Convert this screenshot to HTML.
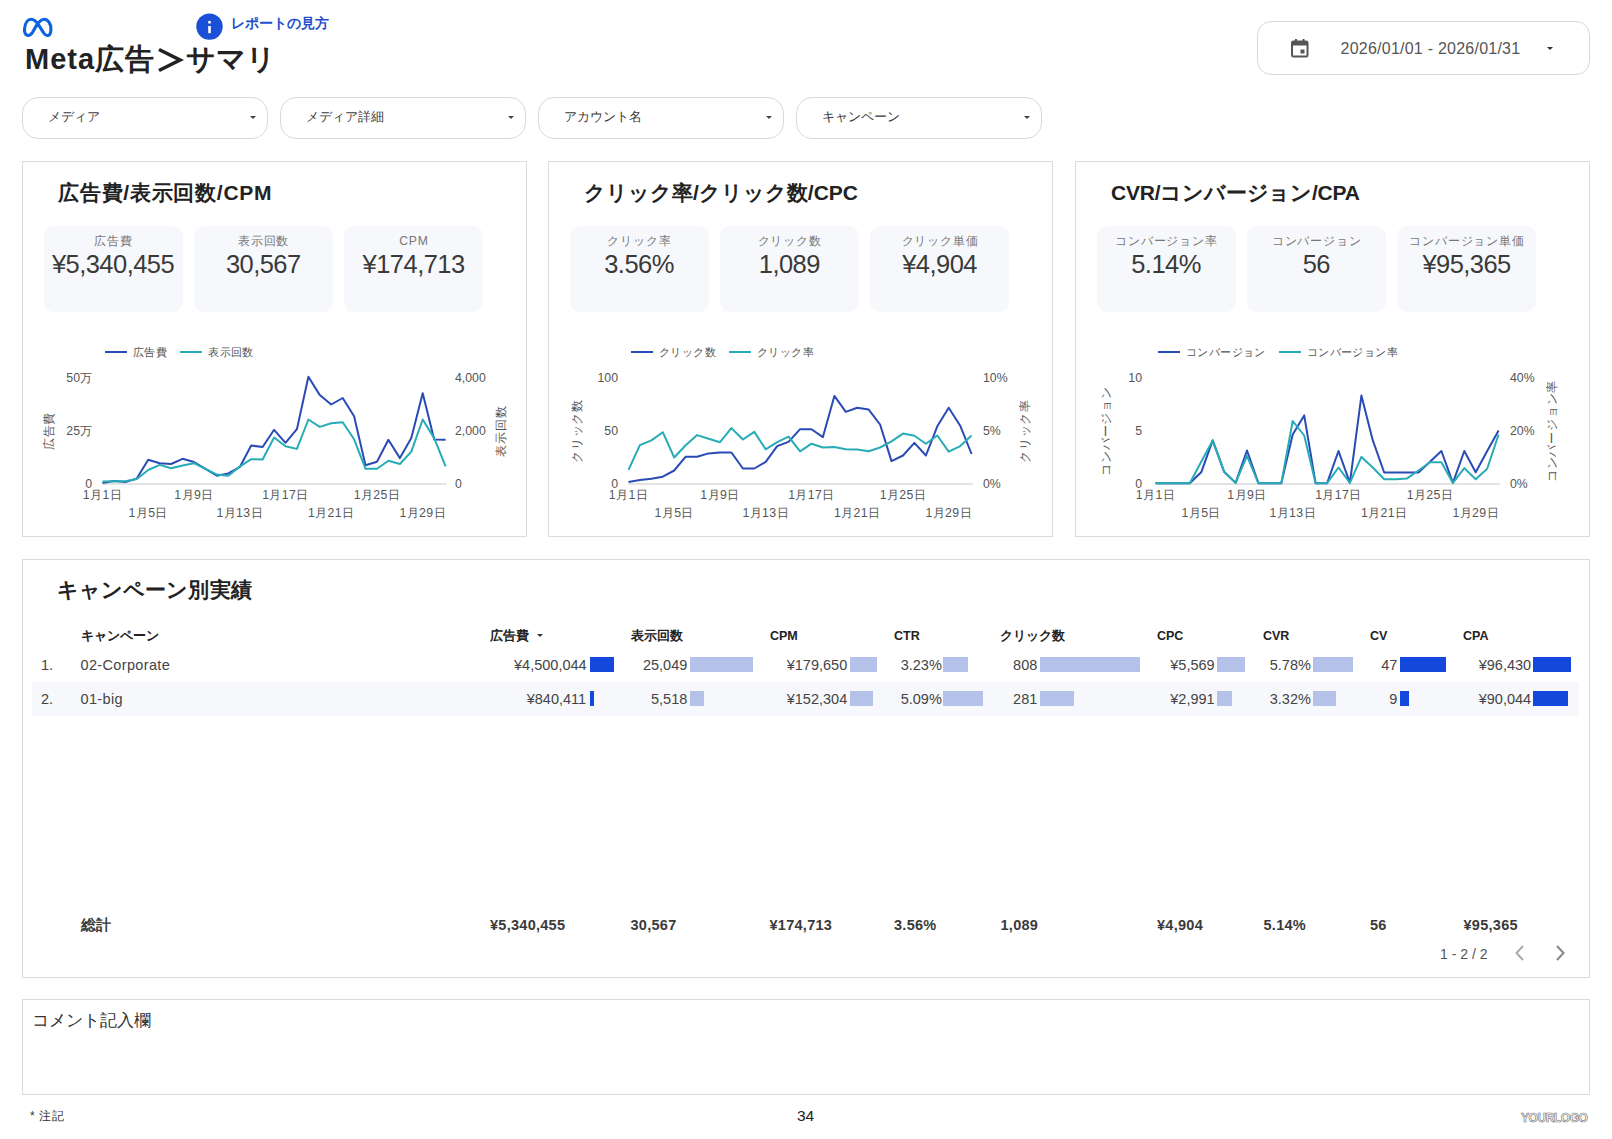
<!DOCTYPE html><html lang="ja"><head><meta charset="utf-8"><title>Meta広告＞サマリ</title><style>
*{margin:0;padding:0;box-sizing:border-box}
html,body{width:1612px;height:1139px;background:#fff;overflow:hidden}
body{font-family:"Liberation Sans",sans-serif;color:#333;position:relative}
.abs{position:absolute;white-space:nowrap}
.panel{position:absolute;border:1px solid #dcdcdc;background:#fff}
.panel>div{position:absolute;white-space:nowrap}
.inner{position:absolute;left:-1px;top:-1px}
.inner>div{position:absolute;white-space:nowrap}
.ptitle{font-size:21px;letter-spacing:0.3px;font-weight:bold;color:#222;line-height:24px}
.card{width:139px;height:86px;background:#f7f8fb;border-radius:10px;text-align:center}
.clab{position:absolute;left:0.8px;right:0;top:7.5px;font-size:12.2px;letter-spacing:0.8px;line-height:16px;color:#777}
.cval{position:absolute;left:0;right:0;top:23px;font-size:25.5px;letter-spacing:-0.55px;line-height:30px;color:#3a3a3a}
.legend{font-size:11.4px;letter-spacing:0.4px;line-height:14px;color:#555;display:flex;align-items:center}
.lline{display:inline-block;width:22px;height:2px;margin-right:6px}
.plot{position:absolute}
.ltick,.rtick{font-size:12.3px;line-height:16px;color:#555}
.atitle{font-size:12.3px;letter-spacing:0.8px;line-height:16px;color:#555;transform:translate(-50%,-50%) rotate(-90deg)}
.xl{font-size:12.3px;letter-spacing:0.4px;line-height:16px;color:#555;transform:translateX(-50%)}
.filter{position:absolute;top:97px;width:246px;height:42px;border:1px solid #dadada;border-radius:16px;background:#fff}
.filter span{position:absolute;left:25px;top:9.5px;font-size:13.4px;line-height:17px;color:#3a3a3a}
.arrow{position:absolute;width:0;height:0;border-left:3.5px solid transparent;border-right:3.5px solid transparent;border-top:3.5px solid #444}
.th{position:absolute;font-size:12.5px;font-weight:bold;color:#222;line-height:16px;white-space:nowrap}
.td{position:absolute;font-size:14.5px;color:#444;line-height:18px;white-space:nowrap}
.tdr{position:absolute;font-size:14.5px;color:#444;line-height:18px;white-space:nowrap;text-align:right}
.bar{position:absolute;height:15px}
.tot{position:absolute;font-size:14.5px;letter-spacing:0.27px;font-weight:bold;color:#3a3a3a;line-height:18px;white-space:nowrap}
</style></head><body>
<svg class="abs" style="left:18px;top:12px" width="40" height="30" viewBox="0 0 1519 1139">
<path d="M390 890 C250 890 240 720 250 620 C270 420 370 275 500 275 C620 275 700 370 780 490 L980 800 C1040 880 1080 895 1130 895 C1220 895 1250 780 1250 640 C1250 430 1130 275 990 275 C870 275 800 370 720 480 L560 760 C500 850 450 890 390 890 Z" fill="none" stroke="#0b64de" stroke-width="118" stroke-linejoin="round"/>
</svg>
<svg class="abs" style="left:195px;top:13px" width="28" height="28" viewBox="0 0 28 28"><circle cx="14.5" cy="13.6" r="13.2" fill="#1a50d8"/><rect x="13.2" y="8" width="2.6" height="2.5" fill="#fff"/><rect x="13.2" y="13" width="2.6" height="7.2" fill="#fff"/></svg>
<div class="abs" style="left:231px;top:14px;font-size:14.2px;line-height:18px;font-weight:bold;color:#1f4fcc">レポートの見方</div>
<div class="abs" style="left:25px;top:42px;font-size:29px;letter-spacing:1px;line-height:34px;font-weight:bold;color:#222">Meta広告</div>
<svg class="abs" style="left:155px;top:45px" width="30" height="30" viewBox="0 0 30 30"><path d="M4 4.5 L25 15 L4 25.5" fill="none" stroke="#222" stroke-width="3.6" stroke-linejoin="miter"/></svg>
<div class="abs" style="left:186px;top:42px;font-size:29px;line-height:34px;font-weight:bold;color:#222">サマリ</div>
<div class="abs" style="left:1257px;top:21px;width:333px;height:54px;border:1px solid #d8d8d8;border-radius:14px;background:#fff"></div>
<svg class="abs" style="left:1290px;top:38px" width="20" height="20" viewBox="0 0 20 20"><rect x="2" y="3.5" width="15.5" height="15" rx="1.3" fill="none" stroke="#555" stroke-width="2"/><rect x="2" y="3.5" width="15.5" height="4" fill="#555"/><rect x="5" y="1" width="2" height="4" fill="#555"/><rect x="12.5" y="1" width="2" height="4" fill="#555"/><rect x="10.5" y="11.5" width="4" height="4" fill="#555"/></svg>
<div class="abs" style="left:1340.5px;top:40px;font-size:16px;letter-spacing:0.24px;line-height:18px;color:#555">2026/01/01 - 2026/01/31</div>
<div class="arrow" style="left:1547px;top:46.5px;border-left-width:3.6px;border-right-width:3.6px;border-top-width:3.6px;border-top-color:#333"></div>
<div class="filter" style="left:22px"><span>メディア</span></div>
<div class="arrow" style="left:249.5px;top:116px;border-left-width:3px;border-right-width:3px;border-top-width:3.2px"></div>
<div class="filter" style="left:280px"><span>メディア詳細</span></div>
<div class="arrow" style="left:507.5px;top:116px;border-left-width:3px;border-right-width:3px;border-top-width:3.2px"></div>
<div class="filter" style="left:538px"><span>アカウント名</span></div>
<div class="arrow" style="left:765.5px;top:116px;border-left-width:3px;border-right-width:3px;border-top-width:3.2px"></div>
<div class="filter" style="left:796px"><span>キャンペーン</span></div>
<div class="arrow" style="left:1023.5px;top:116px;border-left-width:3px;border-right-width:3px;border-top-width:3.2px"></div>
<div class="panel" style="left:22px;top:161px;width:505px;height:376px"><div class="inner" style="width:505px;height:376px">
<div class="ptitle" style="left:36px;top:20px;letter-spacing:0.75px">広告費/表示回数/CPM</div>
<div class="card" style="left:21.5px;top:64.5px"><div class="clab">広告費</div><div class="cval">¥5,340,455</div></div>
<div class="card" style="left:171.8px;top:64.5px"><div class="clab">表示回数</div><div class="cval">30,567</div></div>
<div class="card" style="left:322.1px;top:64.5px"><div class="clab">CPM</div><div class="cval">¥174,713</div></div>
<div class="legend" style="left:83px;top:184px"><span class="lline" style="background:#2a4ab6"></span><span class="ltxt">広告費</span><span class="lline" style="background:#27acb6;margin-left:13px"></span><span class="ltxt">表示回数</span></div>
<svg class="plot" width="505" height="376" viewBox="0 0 505 376" style="left:0;top:0">
<line x1="80.5" y1="323" x2="424.6" y2="323" stroke="#c8c8c8" stroke-width="1.2"/>
<path d="M80.5,321.9 L91.9,319.9 L103.4,321.0 L114.8,317.6 L126.2,298.7 L137.7,302.2 L149.1,303.0 L160.6,297.8 L172.0,301.0 L183.4,307.9 L194.9,314.7 L206.3,312.4 L217.7,306.2 L229.2,284.5 L240.6,286.0 L252.1,268.8 L263.5,281.8 L274.9,268.2 L286.4,215.8 L297.8,234.1 L309.2,243.5 L320.7,237.0 L332.1,255.3 L343.5,304.2 L355.0,300.7 L366.4,278.8 L377.9,297.1 L389.3,277.1 L400.7,232.3 L412.2,278.5 L423.6,278.8" fill="none" stroke="#2a4ab6" stroke-width="2" stroke-linejoin="round"/>
<path d="M80.5,320.4 L91.9,320.2 L103.4,320.2 L114.8,318.0 L126.2,309.0 L137.7,303.9 L149.1,307.3 L160.6,304.5 L172.0,302.2 L183.4,307.9 L194.9,313.6 L206.3,314.7 L217.7,305.6 L229.2,298.2 L240.6,298.5 L252.1,276.5 L263.5,285.3 L274.9,287.9 L286.4,258.5 L297.8,265.9 L309.2,262.3 L320.7,261.2 L332.1,278.3 L343.5,307.7 L355.0,307.7 L366.4,299.7 L377.9,303.0 L389.3,290.6 L400.7,258.5 L412.2,277.1 L423.6,305.4" fill="none" stroke="#27acb6" stroke-width="2" stroke-linejoin="round"/>
</svg>
<div class="ltick" style="right:435px;top:208.5px">50万</div>
<div class="ltick" style="right:435px;top:261.8px">25万</div>
<div class="ltick" style="right:435px;top:315.0px">0</div>
<div class="rtick" style="left:433px;top:208.5px">4,000</div>
<div class="rtick" style="left:433px;top:261.8px">2,000</div>
<div class="rtick" style="left:433px;top:315.0px">0</div>
<div class="atitle" style="left:27px;top:270px">広告費</div>
<div class="atitle" style="left:479px;top:270px">表示回数</div>
<div class="xl" style="left:80.5px;top:326.3px">1月1日</div>
<div class="xl" style="left:126.2px;top:343.8px">1月5日</div>
<div class="xl" style="left:172.0px;top:326.3px">1月9日</div>
<div class="xl" style="left:217.7px;top:343.8px">1月13日</div>
<div class="xl" style="left:263.5px;top:326.3px">1月17日</div>
<div class="xl" style="left:309.2px;top:343.8px">1月21日</div>
<div class="xl" style="left:355.0px;top:326.3px">1月25日</div>
<div class="xl" style="left:400.7px;top:343.8px">1月29日</div>
</div></div>
<div class="panel" style="left:548px;top:161px;width:505px;height:376px"><div class="inner" style="width:505px;height:376px">
<div class="ptitle" style="left:36px;top:20px;letter-spacing:0.0px">クリック率/クリック数/CPC</div>
<div class="card" style="left:21.5px;top:64.5px"><div class="clab">クリック率</div><div class="cval">3.56%</div></div>
<div class="card" style="left:171.8px;top:64.5px"><div class="clab">クリック数</div><div class="cval">1,089</div></div>
<div class="card" style="left:322.1px;top:64.5px"><div class="clab">クリック単価</div><div class="cval">¥4,904</div></div>
<div class="legend" style="left:83px;top:184px"><span class="lline" style="background:#2a4ab6"></span><span class="ltxt">クリック数</span><span class="lline" style="background:#27acb6;margin-left:13px"></span><span class="ltxt">クリック率</span></div>
<svg class="plot" width="505" height="376" viewBox="0 0 505 376" style="left:0;top:0">
<line x1="80.5" y1="323" x2="424.6" y2="323" stroke="#c8c8c8" stroke-width="1.2"/>
<path d="M80.5,321.0 L91.9,318.9 L103.4,317.7 L114.8,315.7 L126.2,309.5 L137.7,295.7 L149.1,295.7 L160.6,292.4 L172.0,291.5 L183.4,291.5 L194.9,307.5 L206.3,307.5 L217.7,300.9 L229.2,285.1 L240.6,280.9 L252.1,268.2 L263.5,268.2 L274.9,276.1 L286.4,234.9 L297.8,250.9 L309.2,246.7 L320.7,248.6 L332.1,263.5 L343.5,300.1 L355.0,294.5 L366.4,281.8 L377.9,294.5 L389.3,265.3 L400.7,246.7 L412.2,264.7 L423.6,293.0" fill="none" stroke="#2a4ab6" stroke-width="2" stroke-linejoin="round"/>
<path d="M80.5,308.9 L91.9,284.2 L103.4,279.4 L114.8,271.2 L126.2,296.5 L137.7,284.2 L149.1,274.1 L160.6,277.7 L172.0,281.2 L183.4,267.1 L194.9,278.5 L206.3,270.9 L217.7,288.3 L229.2,281.2 L240.6,275.7 L252.1,290.3 L263.5,282.7 L274.9,286.5 L286.4,285.9 L297.8,288.3 L309.2,288.6 L320.7,290.3 L332.1,286.5 L343.5,280.4 L355.0,272.6 L366.4,274.7 L377.9,282.7 L389.3,274.5 L400.7,290.6 L412.2,285.1 L423.6,274.5" fill="none" stroke="#27acb6" stroke-width="2" stroke-linejoin="round"/>
</svg>
<div class="ltick" style="right:435px;top:208.5px">100</div>
<div class="ltick" style="right:435px;top:261.8px">50</div>
<div class="ltick" style="right:435px;top:315.0px">0</div>
<div class="rtick" style="left:435px;top:208.5px">10%</div>
<div class="rtick" style="left:435px;top:261.8px">5%</div>
<div class="rtick" style="left:435px;top:315.0px">0%</div>
<div class="atitle" style="left:28.5px;top:270px">クリック数</div>
<div class="atitle" style="left:477px;top:270px">クリック率</div>
<div class="xl" style="left:80.5px;top:326.3px">1月1日</div>
<div class="xl" style="left:126.2px;top:343.8px">1月5日</div>
<div class="xl" style="left:172.0px;top:326.3px">1月9日</div>
<div class="xl" style="left:217.7px;top:343.8px">1月13日</div>
<div class="xl" style="left:263.5px;top:326.3px">1月17日</div>
<div class="xl" style="left:309.2px;top:343.8px">1月21日</div>
<div class="xl" style="left:355.0px;top:326.3px">1月25日</div>
<div class="xl" style="left:400.7px;top:343.8px">1月29日</div>
</div></div>
<div class="panel" style="left:1075px;top:161px;width:515px;height:376px"><div class="inner" style="width:515px;height:376px">
<div class="ptitle" style="left:36px;top:20px;letter-spacing:-0.2px">CVR/コンバージョン/CPA</div>
<div class="card" style="left:21.5px;top:64.5px"><div class="clab">コンバージョン率</div><div class="cval">5.14%</div></div>
<div class="card" style="left:171.8px;top:64.5px"><div class="clab">コンバージョン</div><div class="cval">56</div></div>
<div class="card" style="left:322.1px;top:64.5px"><div class="clab">コンバージョン単価</div><div class="cval">¥95,365</div></div>
<div class="legend" style="left:83px;top:184px"><span class="lline" style="background:#2a4ab6"></span><span class="ltxt">コンバージョン</span><span class="lline" style="background:#27acb6;margin-left:13px"></span><span class="ltxt">コンバージョン率</span></div>
<svg class="plot" width="515" height="376" viewBox="0 0 515 376" style="left:0;top:0">
<line x1="80.5" y1="323" x2="424.6" y2="323" stroke="#c8c8c8" stroke-width="1.2"/>
<path d="M80.5,322.2 L91.9,322.2 L103.4,322.2 L114.8,322.2 L126.2,311.3 L137.7,279.4 L149.1,310.7 L160.6,321.9 L172.0,289.5 L183.4,322.2 L194.9,322.2 L206.3,322.2 L217.7,273.5 L229.2,254.4 L240.6,322.2 L252.1,322.2 L263.5,290.0 L274.9,321.9 L286.4,234.6 L297.8,279.4 L309.2,311.5 L320.7,311.5 L332.1,311.5 L343.5,311.5 L355.0,300.7 L366.4,290.0 L377.9,321.9 L389.3,290.0 L400.7,311.3 L412.2,290.0 L423.6,269.4" fill="none" stroke="#2a4ab6" stroke-width="2" stroke-linejoin="round"/>
<path d="M80.5,322.2 L91.9,322.2 L103.4,322.2 L114.8,322.2 L126.2,300.7 L137.7,279.4 L149.1,310.7 L160.6,321.9 L172.0,294.8 L183.4,322.2 L194.9,322.2 L206.3,322.2 L217.7,260.0 L229.2,274.5 L240.6,322.2 L252.1,322.2 L263.5,306.5 L274.9,321.9 L286.4,295.9 L297.8,306.5 L309.2,318.3 L320.7,318.3 L332.1,317.4 L343.5,309.5 L355.0,301.2 L366.4,301.2 L377.9,321.9 L389.3,307.1 L400.7,318.3 L412.2,307.7 L423.6,273.5" fill="none" stroke="#27acb6" stroke-width="2" stroke-linejoin="round"/>
</svg>
<div class="ltick" style="right:448px;top:208.5px">10</div>
<div class="ltick" style="right:448px;top:261.8px">5</div>
<div class="ltick" style="right:448px;top:315.0px">0</div>
<div class="rtick" style="left:435px;top:208.5px">40%</div>
<div class="rtick" style="left:435px;top:261.8px">20%</div>
<div class="rtick" style="left:435px;top:315.0px">0%</div>
<div class="atitle" style="left:31px;top:270px">コンバージョン</div>
<div class="atitle" style="left:477px;top:270px">コンバージョン率</div>
<div class="xl" style="left:80.5px;top:326.3px">1月1日</div>
<div class="xl" style="left:126.2px;top:343.8px">1月5日</div>
<div class="xl" style="left:172.0px;top:326.3px">1月9日</div>
<div class="xl" style="left:217.7px;top:343.8px">1月13日</div>
<div class="xl" style="left:263.5px;top:326.3px">1月17日</div>
<div class="xl" style="left:309.2px;top:343.8px">1月21日</div>
<div class="xl" style="left:355.0px;top:326.3px">1月25日</div>
<div class="xl" style="left:400.7px;top:343.8px">1月29日</div>
</div></div>
<div class="panel" style="left:22px;top:559px;width:1568px;height:419px"></div>
<div class="abs" style="left:57px;top:578px;font-size:21px;letter-spacing:0.08px;line-height:24px;font-weight:bold;color:#222">キャンペーン別実績</div>
<div class="abs" style="left:32px;top:682px;width:1547px;height:34px;background:#f7f8fb"></div>
<div class="th" style="left:81px;top:627.5px">キャンペーン</div>
<div class="th" style="left:490px;top:627.5px">広告費</div>
<div class="th" style="left:631px;top:627.5px">表示回数</div>
<div class="th" style="left:770px;top:627.5px">CPM</div>
<div class="th" style="left:894px;top:627.5px">CTR</div>
<div class="th" style="left:1000px;top:627.5px">クリック数</div>
<div class="th" style="left:1157px;top:627.5px">CPC</div>
<div class="th" style="left:1263px;top:627.5px">CVR</div>
<div class="th" style="left:1370px;top:627.5px">CV</div>
<div class="th" style="left:1463px;top:627.5px">CPA</div>
<div class="arrow" style="left:536.5px;top:634px;border-left-width:3px;border-right-width:3px;border-top-width:3.5px;border-top-color:#333"></div>
<div class="td" style="left:41px;top:656px">1.</div>
<div class="td" style="left:80.5px;top:656px;letter-spacing:0.35px">02-Corporate</div>
<div class="tdr" style="right:1025.4px;top:656px">¥4,500,044</div>
<div class="bar" style="left:589.7px;top:657px;width:24px;background:#1447dc"></div>
<div class="tdr" style="right:924.7px;top:656px">25,049</div>
<div class="bar" style="left:689.9px;top:657px;width:63px;background:#b4c1e9"></div>
<div class="tdr" style="right:764.8px;top:656px">¥179,650</div>
<div class="bar" style="left:850.0px;top:657px;width:26.7px;background:#b4c1e9"></div>
<div class="tdr" style="right:670.2px;top:656px">3.23%</div>
<div class="bar" style="left:943.4px;top:657px;width:24.5px;background:#b4c1e9"></div>
<div class="tdr" style="right:574.7px;top:656px">808</div>
<div class="bar" style="left:1039.8px;top:657px;width:100px;background:#b4c1e9"></div>
<div class="tdr" style="right:397.4px;top:656px">¥5,569</div>
<div class="bar" style="left:1217.2px;top:657px;width:27.7px;background:#b4c1e9"></div>
<div class="tdr" style="right:301.1px;top:656px">5.78%</div>
<div class="bar" style="left:1313.0px;top:657px;width:39.8px;background:#b4c1e9"></div>
<div class="tdr" style="right:214.6px;top:656px">47</div>
<div class="bar" style="left:1400.0px;top:657px;width:46.2px;background:#1447dc"></div>
<div class="tdr" style="right:80.9px;top:656px">¥96,430</div>
<div class="bar" style="left:1533.3px;top:657px;width:37.5px;background:#1447dc"></div>
<div class="td" style="left:41px;top:690px">2.</div>
<div class="td" style="left:80.5px;top:690px;letter-spacing:0.35px">01-big</div>
<div class="tdr" style="right:1025.9px;top:690px">¥840,411</div>
<div class="bar" style="left:589.7px;top:691px;width:4.5px;background:#1447dc"></div>
<div class="tdr" style="right:924.7px;top:690px">5,518</div>
<div class="bar" style="left:689.9px;top:691px;width:14px;background:#b4c1e9"></div>
<div class="tdr" style="right:764.8px;top:690px">¥152,304</div>
<div class="bar" style="left:850.0px;top:691px;width:22.6px;background:#b4c1e9"></div>
<div class="tdr" style="right:670.2px;top:690px">5.09%</div>
<div class="bar" style="left:943.4px;top:691px;width:39.6px;background:#b4c1e9"></div>
<div class="tdr" style="right:574.7px;top:690px">281</div>
<div class="bar" style="left:1039.8px;top:691px;width:34.5px;background:#b4c1e9"></div>
<div class="tdr" style="right:397.4px;top:690px">¥2,991</div>
<div class="bar" style="left:1217.2px;top:691px;width:15px;background:#b4c1e9"></div>
<div class="tdr" style="right:301.1px;top:690px">3.32%</div>
<div class="bar" style="left:1313.0px;top:691px;width:22.8px;background:#b4c1e9"></div>
<div class="tdr" style="right:214.6px;top:690px">9</div>
<div class="bar" style="left:1400.0px;top:691px;width:8.8px;background:#1447dc"></div>
<div class="tdr" style="right:80.9px;top:690px">¥90,044</div>
<div class="bar" style="left:1533.3px;top:691px;width:35px;background:#1447dc"></div>
<div class="tot" style="left:81px;top:915.5px">総計</div>
<div class="tot" style="left:490px;top:915.5px">¥5,340,455</div>
<div class="tot" style="left:630.5px;top:915.5px">30,567</div>
<div class="tot" style="left:769.5px;top:915.5px">¥174,713</div>
<div class="tot" style="left:894px;top:915.5px">3.56%</div>
<div class="tot" style="left:1000.5px;top:915.5px">1,089</div>
<div class="tot" style="left:1157px;top:915.5px">¥4,904</div>
<div class="tot" style="left:1263.5px;top:915.5px">5.14%</div>
<div class="tot" style="left:1370px;top:915.5px">56</div>
<div class="tot" style="left:1463.5px;top:915.5px">¥95,365</div>
<div class="abs" style="left:1440px;top:945px;font-size:14px;line-height:18px;color:#555">1 - 2 / 2</div>
<svg class="abs" style="left:1510px;top:943px" width="20" height="20" viewBox="0 0 20 20"><path d="M13 3 L6.5 10 L13 17" fill="none" stroke="#aaa" stroke-width="2"/></svg>
<svg class="abs" style="left:1550px;top:943px" width="20" height="20" viewBox="0 0 20 20"><path d="M7 3 L13.5 10 L7 17" fill="none" stroke="#888" stroke-width="2"/></svg>
<div class="panel" style="left:22px;top:999px;width:1568px;height:96px"></div>
<div class="abs" style="left:32px;top:1010px;font-size:16.5px;line-height:20px;color:#333">コメント記入欄</div>
<div class="abs" style="left:30px;top:1108px;font-size:12px;letter-spacing:0.5px;line-height:16px;color:#333">* 注記</div>
<div class="abs" style="left:797px;top:1107px;font-size:15.5px;line-height:18px;color:#222">34</div>
<div class="abs" style="left:1521px;top:1111px;font-size:12px;line-height:14px;font-weight:bold;color:#fff;-webkit-text-stroke:0.6px #6e6e6e;letter-spacing:-0.45px">YOURLOGO</div>
</body></html>
